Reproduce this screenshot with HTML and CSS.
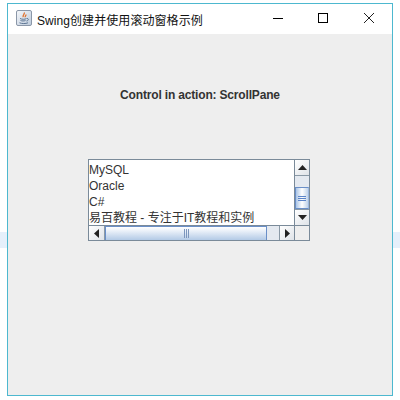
FILE: index.html
```html
<!DOCTYPE html>
<html lang="zh">
<head>
<meta charset="utf-8">
<title>Swing</title>
<link rel="stylesheet" href="styles.css">
</head>
<body>
<div class="window">
  <div class="titlebar">
    <svg class="java-icon" width="16" height="16" viewBox="0 0 16 16">
      <defs><linearGradient id="jg" x1="0" y1="0" x2="1" y2="1"><stop offset="0" stop-color="#f6f8fb"/><stop offset="1" stop-color="#bccadb"/></linearGradient></defs>
      <rect x="0.5" y="0.5" width="15" height="15" rx="1.5" fill="url(#jg)" stroke="#8b97a8"/>
      <path d="M8 2.500c1.500 1.500-2 2.500-.7 4.700M9.800 4.500c.6 1-1 1.500-.5 2.800" fill="none" stroke="#e0702c" stroke-width="1.300"/>
      <path d="M4 8.500c2 1 5 1 6.500 0M11 8.500c2 0 2 2-.5 2.500M4.500 10.500c1.500.6 3.500.6 5 0M3.500 12.800c2.500 1 6 1 8.500 0" fill="none" stroke="#5d7593"/>
    </svg>
    <span class="title">Swing创建并使用滚动窗格示例</span>
    <div class="controls">
      <svg class="ctl" width="46" height="30" viewBox="0 0 46 30"><path d="M19 14.500h10" stroke="#000" fill="none"/></svg>
      <svg class="ctl" width="46" height="30" viewBox="0 0 46 30"><rect x="18.500" y="9.500" width="9" height="9" fill="none" stroke="#000"/></svg>
      <svg class="ctl" width="46" height="30" viewBox="0 0 46 30"><path d="M18 9l10 10M28 9l-10 10" stroke="#222" fill="none"/></svg>
    </div>
  </div>
  <div class="content">
    <div class="status">Control in action: ScrollPane</div>
    <div class="scrollpane">
      <div class="top">
        <div class="list">
          <div class="item">MySQL</div>
          <div class="item">Oracle</div>
          <div class="item">C#</div>
          <div class="item">易百教程 - 专注于IT教程和实例</div>
        </div>
        <div class="vbar">
          <div class="btn"><svg width="9" height="5" viewBox="0 0 9 5"><path d="M4.500 0L9 5H0z" fill="#222"/></svg></div>
          <div class="track-v"></div>
          <div class="thumb-v"><i></i><i></i><i></i></div>
          <div class="btn btn-end"><svg width="9" height="5" viewBox="0 0 9 5"><path d="M0 0h9L4.500 5z" fill="#222"/></svg></div>
        </div>
      </div>
      <div class="hbar">
        <div class="btn-h"><svg width="5" height="9" viewBox="0 0 5 9"><path d="M5 0v9L0 4.500z" fill="#222"/></svg></div>
        <div class="thumb-h"><i></i><i></i><i></i></div>
        <div class="track-h"></div>
        <div class="btn-h btn-h-end"><svg width="5" height="9" viewBox="0 0 5 9"><path d="M0 0l5 4.500L0 9z" fill="#222"/></svg></div>
        <div class="corner"></div>
      </div>
    </div>
  </div>
</div>
</body>
</html>
```
FILE: styles.css
```css
html, body { margin: 0; padding: 0; }
body {
  width: 400px;
  height: 400px;
  overflow: hidden;
  box-sizing: border-box;
  padding: 3px 7px;
  background: linear-gradient(#fff, #fff) 0 0 / 400px 232px no-repeat,
              linear-gradient(#fff, #fff) 0 248px / 400px 152px no-repeat,
              #e6f0fb;
}
.window {
  width: 386px;
  height: 393px;
  box-sizing: border-box;
  border: 1px solid #4db8cf;
  display: flex;
  flex-direction: column;
  background: #eee;
}
.titlebar {
  height: 30px;
  flex: none;
  background: #fff;
  display: flex;
  align-items: center;
  padding-left: 8px;
}
.java-icon { flex: none; margin: -2px 5px 0 0; }
.title {
  font: 12px "Liberation Sans", "Noto Sans CJK SC", sans-serif;
  letter-spacing: 0.07px;
  color: #111;
}
.controls { margin-left: auto; display: flex; }
.ctl { display: block; }
.content {
  flex: 1;
  display: flex;
  flex-direction: column;
  align-items: center;
}
.status {
  margin-top: 54px;
  font: bold 12px/14px "Liberation Sans", sans-serif;
  letter-spacing: -0.17px;
  color: #333;
}
.scrollpane {
  margin: 57px 2px 0 0;
  width: 222px;
  height: 82px;
  box-sizing: border-box;
  border: 1px solid #7a8a99;
  background: #fff;
  display: flex;
  flex-direction: column;
}
.top { flex: 1; display: flex; min-height: 0; }
.list { flex: 1; min-width: 0; padding-top: 2px; overflow: hidden; }
.item {
  font: 12px/16px "Liberation Sans", "Noto Sans CJK SC", sans-serif;
  color: #333;
  white-space: nowrap;
}
.item:last-child { padding-top: 2px; line-height: 13px; }
.vbar {
  width: 15px;
  flex: none;
  box-sizing: border-box;
  display: flex;
  flex-direction: column;
  border-left: 1px solid #7a8a99;
  background: #e4e9f0;
}
.btn {
  height: 15px;
  flex: none;
  display: flex;
  align-items: center;
  justify-content: center;
  background: linear-gradient(135deg, #fff, #dfe3e8);
  border-bottom: 1px solid #8a99a6;
}
.btn-end { border-bottom: 0; border-top: 1px solid #8a99a6; }
.track-v { height: 11px; flex: none; background: #e4e9f0; }
.thumb-v {
  flex: 1;
  border: 1px solid #6a8fc8;
  border-right-color: #9db8de;
  background: linear-gradient(90deg, #a9c4e6, #fff 50%, #c0d3ea);
  display: flex;
  flex-direction: column;
  align-items: center;
  justify-content: center;
  gap: 1px;
}
.thumb-v i { display: block; width: 8px; height: 1px; background: #5c85c9; }
.hbar {
  height: 15px;
  flex: none;
  display: flex;
  border-top: 1px solid #7a8a99;
  background: #e4e9f0;
  box-sizing: border-box;
}
.btn-h {
  width: 15px;
  flex: none;
  display: flex;
  align-items: center;
  justify-content: center;
  background: linear-gradient(135deg, #fff, #dfe3e8);
  border-right: 1px solid #8a99a6;
}
.btn-h-end { width: 14px; border-right: 0; border-left: 1px solid #8a99a6; }
.thumb-h {
  width: 162px;
  flex: none;
  border-left: 1px solid #6a8fc8;
  border-right: 1px solid #6a8fc8;
  border-top: 1px solid #6a8fc8;
  background: linear-gradient(#fff, #eef3fa 25%, #b3cae6);
  display: flex;
  align-items: center;
  justify-content: center;
  gap: 1px;
  box-sizing: border-box;
}
.thumb-h i { display: block; width: 1px; height: 9px; background: #7c96bd; }
.track-h { flex: 1; background: #e4e9f0; }
.corner { width: 15px; flex: none; box-sizing: border-box; border-left: 1px solid #7a8a99; background: #eee; }
```
